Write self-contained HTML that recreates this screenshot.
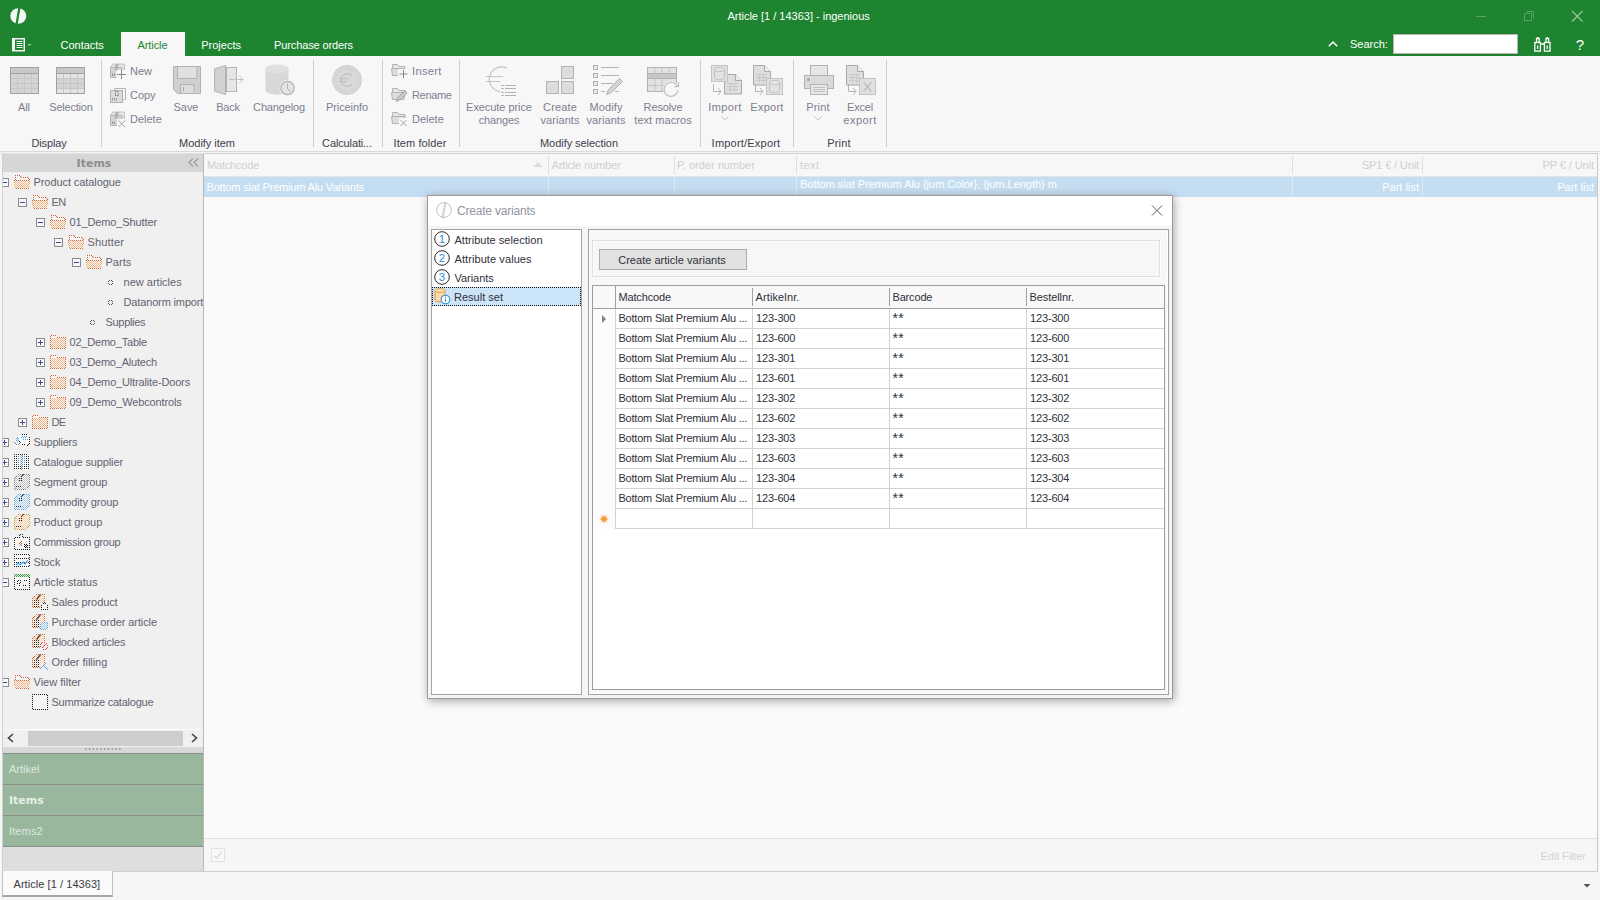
<!DOCTYPE html>
<html lang="en"><head><meta charset="utf-8"><title>Article [1 / 14363] - ingenious</title>
<style>
html,body{margin:0;padding:0}
body{width:1600px;height:900px;position:relative;overflow:hidden;background:#f7f7f7;font-family:"Liberation Sans",sans-serif;font-size:11px;color:#6c6c80;}
.a{position:absolute;white-space:nowrap}
.t{position:absolute;white-space:nowrap;line-height:14px;height:14px}
.c{transform:translateX(-50%);text-align:center}
.r{transform:translateX(-100%);text-align:right}
svg{position:absolute;overflow:visible}
</style></head>
<body>
<div class="a" style="left:0px;top:0px;width:1600px;height:56px;background:#1e8430"></div>
<svg style="left:10px;top:8px" width="17" height="17" viewBox="0 0 17 17"><ellipse cx="8.3" cy="8" rx="8" ry="7.8" fill="#f4f8f4"/><path d="M8.3 -0.5 L10.6 -0.5 L7.6 16.5 L5.4 16.5 Z" fill="#1e8430"/></svg>
<div class="t c" style="left:798.6px;top:9px;letter-spacing:-0.006px;color:#fff;font-size:11px">Article [1 / 14363] - ingenious</div>
<svg style="left:1470px;top:6px" width="120" height="20" viewBox="0 0 120 20"><path d="M6 10.5h10" stroke="#58a566" stroke-width="1" fill="none"/><path d="M56.5 5.5h7v7M54.5 7.5h7v7h-7z" stroke="#58a566" stroke-width="1" fill="none"/><path d="M102 5l10.5 10.5M112.5 5L102 15.5" stroke="#9ccaa4" stroke-width="1.1" fill="none"/></svg>
<svg style="left:12px;top:38px" width="22" height="14" viewBox="0 0 22 14"><rect x="0.75" y="0.75" width="11.5" height="12" fill="#1e8430" stroke="#f2f2f2" stroke-width="1.5"/><rect x="0.5" y="0.5" width="2.5" height="12.5" fill="#f2f2f2"/><path d="M4.5 3.5h6M4.5 5.5h6M4.5 7.5h6M4.5 9.5h6" stroke="#f2f2f2" stroke-width="1"/><path d="M15.5 6h4l-2 2z" fill="#9fcda8"/></svg>
<div class="t c" style="left:82.2px;top:38px;letter-spacing:-0.005px;color:#fff">Contacts</div>
<div class="a" style="left:121px;top:32px;width:64px;height:24px;background:#f7f7f7"></div>
<div class="t c" style="left:152.5px;top:38px;letter-spacing:-0.080px;color:#1e8430">Article</div>
<div class="t c" style="left:221.1px;top:38px;letter-spacing:0.006px;color:#fff">Projects</div>
<div class="t c" style="left:313.5px;top:38px;letter-spacing:-0.123px;color:#fff">Purchase orders</div>
<svg style="left:1328px;top:40px" width="10" height="8" viewBox="0 0 10 8"><path d="M0.8 6.2L5 2l4.2 4.2" stroke="#fff" stroke-width="1.5" fill="none"/></svg>
<div class="t " style="left:1350px;top:37px;letter-spacing:-0.020px;color:#fff">Search:</div>
<div class="a" style="left:1393px;top:34px;width:123px;height:18px;background:#fff;border:1px solid #b4b4b4"></div>
<svg style="left:1534px;top:36px" width="17" height="16" viewBox="0 0 17 16"><g fill="none" stroke="#fff" stroke-width="1.3"><rect x="0.8" y="6.5" width="5.6" height="8.6"/><rect x="10.4" y="6.5" width="5.6" height="8.6"/><path d="M2.5 6.5v-4h2.6v4M12 6.5v-4h2.6v4M6.4 8h4M3.6 9.5v3.5M13.2 9.5v3.5M3.8 1v1.5M13.3 1v1.5"/></g></svg>
<div class="t c" style="left:1580px;top:38px;color:#fff;font-size:15px;line-height:14px">?</div>
<div class="a" style="left:0px;top:56px;width:1600px;height:95px;background:#f7f7f7"></div>
<div class="a" style="left:0px;top:151px;width:1600px;height:1px;background:#dadada"></div>
<div class="a" style="left:0px;top:152px;width:1600px;height:2px;background:#f4f4f4"></div>
<div class="a" style="left:101px;top:60px;width:1px;height:87px;background:#cfcfcf"></div>
<div class="a" style="left:313px;top:60px;width:1px;height:87px;background:#cfcfcf"></div>
<div class="a" style="left:382px;top:60px;width:1px;height:87px;background:#cfcfcf"></div>
<div class="a" style="left:459px;top:60px;width:1px;height:87px;background:#cfcfcf"></div>
<div class="a" style="left:700px;top:60px;width:1px;height:87px;background:#cfcfcf"></div>
<div class="a" style="left:793px;top:60px;width:1px;height:87px;background:#cfcfcf"></div>
<div class="a" style="left:886px;top:60px;width:1px;height:87px;background:#cfcfcf"></div>
<svg style="left:10px;top:67px" width="29" height="27" viewBox="0 0 29 27"><rect x="0.500" y="0.500" width="28" height="26" fill="#d4d4d4" stroke="#a2a2a2"/><rect x="0.500" y="0.500" width="28" height="6" fill="#c8c8c8" stroke="#a2a2a2"/><path d="M7.500 7v19M14.500 7v19M21.500 7v19M1 11.500h27M1 16.500h27M1 21.500h27" stroke="#c6c6c6" fill="none"/></svg>
<svg style="left:56px;top:67px" width="29" height="27" viewBox="0 0 29 27"><rect x="0.500" y="0.500" width="28" height="26" fill="#d4d4d4" stroke="#a2a2a2"/><rect x="1" y="6" width="27" height="5" fill="#e2e2e2"/><rect x="1" y="22" width="27" height="4" fill="#e2e2e2"/><rect x="0.500" y="0.500" width="28" height="6" fill="#c8c8c8" stroke="#a2a2a2"/><path d="M7.500 7v19M14.500 7v19M21.500 7v19M1 11.500h27M1 16.500h27M1 21.500h27" stroke="#c6c6c6" fill="none"/></svg>
<div class="t c" style="left:24px;top:100px;letter-spacing:-0.140px;color:#7e7e90">All</div>
<div class="t c" style="left:71px;top:100px;letter-spacing:-0.220px;color:#7e7e90">Selection</div>
<div class="t c" style="left:49px;top:136px;letter-spacing:-0.123px;color:#40404c">Display</div>
<svg style="left:110px;top:63px" width="17" height="17" viewBox="0 0 17 17"><path d="M0.500 4.500l2.500-3.500h11.500v7l-2.500 3.500" fill="#e6e6e6" stroke="#c2c2c2"/><path d="M0.500 4.500h11.500v10h-11.500z" fill="#d6d6d6" stroke="#b2b2b2"/><path d="M5.500 1h3.500l-1 3.500v3h-3.500v-3z" fill="#b4b4b4"/><path d="M2.500 10.500v2.500M4.500 10.500v2.500" stroke="#8e8e8e"/><rect x="6.500" y="7" width="10" height="9.500" fill="#f7f7f7"/><path d="M11.500 7v9M7 11.500h9" stroke="#8a8a8a" fill="none"/></svg>
<svg style="left:110px;top:87px" width="17" height="17" viewBox="0 0 17 17"><path d="M4.5 3.5v-2h11v11h-2" fill="none" stroke="#b2b2b2"/><rect x="0.5" y="3.5" width="12" height="12" fill="#dcdcdc" stroke="#b2b2b2"/><rect x="5.5" y="4.5" width="2.5" height="4" fill="#eee" stroke="#9a9a9a"/><path d="M2.5 11v2.5M4.5 11v2.5M6.5 11v2.5" stroke="#9a9a9a"/></svg>
<svg style="left:110px;top:111px" width="17" height="17" viewBox="0 0 17 17"><path d="M0.500 4.500l2.500-3.500h11.500v7l-2.500 3.500" fill="#e6e6e6" stroke="#c2c2c2"/><path d="M0.500 4.500h11.500v10h-11.500z" fill="#d6d6d6" stroke="#b2b2b2"/><path d="M5.500 1h3.500l-1 3.500v3h-3.500v-3z" fill="#b4b4b4"/><path d="M2.500 10.500v2.500M4.500 10.500v2.500" stroke="#8e8e8e"/><rect x="7" y="8" width="9.500" height="8.500" fill="#f7f7f7"/><path d="M8.500 9.500l6.500 6.500M15 9.500l-6.500 6.500" stroke="#a6a6a6" fill="none"/></svg>
<div class="t " style="left:130px;top:64px;letter-spacing:-0.067px;color:#7e7e90">New</div>
<div class="t " style="left:130px;top:88px;letter-spacing:-0.047px;color:#7e7e90">Copy</div>
<div class="t " style="left:130px;top:112px;letter-spacing:-0.002px;color:#7e7e90">Delete</div>
<svg style="left:173px;top:66px" width="28" height="28" viewBox="0 0 28 28"><path d="M0.5 0.5h27v27h-23l-4-4z" fill="#d0d0d0" stroke="#b2b2b2"/><rect x="4.5" y="0.5" width="19.5" height="12" fill="#e0e0e0" stroke="#b2b2b2"/><rect x="7.5" y="18.5" width="13.5" height="9" fill="#dcdcdc" stroke="#b2b2b2"/><path d="M10.5 21v4" stroke="#a8a8a8"/></svg>
<div class="t c" style="left:186px;top:100px;letter-spacing:-0.073px;color:#7e7e90">Save</div>
<svg style="left:214px;top:64px" width="32" height="32" viewBox="0 0 32 32"><rect x="12.5" y="3.5" width="10" height="24" fill="#e6e6e6" stroke="#b2b2b2"/><path d="M0.5 5l11-3.5v29l-11-3.5z" fill="#d2d2d2" stroke="#b2b2b2"/><path d="M15 15.500h14M25 11.500l4 4l-4 4" stroke="#c0c0c0" fill="none"/></svg>
<div class="t c" style="left:228px;top:100px;letter-spacing:-0.217px;color:#7e7e90">Back</div>
<svg style="left:265px;top:64px" width="32" height="33" viewBox="0 0 32 33"><path d="M0.500 5v21c0 6 23 6 23 0v-21z" fill="#d8d8d8"/><ellipse cx="12" cy="5" rx="11.500" ry="4.500" fill="#e0e0e0"/><circle cx="22.500" cy="24" r="8" fill="#f7f7f7"/><circle cx="22.500" cy="24" r="6.700" fill="#e4e4e4" stroke="#b2b2b2" stroke-width="1.2"/><path d="M22.500 19.500v5l3 3" stroke="#b2b2b2" fill="none"/></svg>
<div class="t c" style="left:279px;top:100px;letter-spacing:-0.161px;color:#7e7e90">Changelog</div>
<div class="t c" style="left:207px;top:136px;letter-spacing:-0.041px;color:#40404c">Modify item</div>
<svg style="left:332px;top:65px" width="30" height="30" viewBox="0 0 30 30"><circle cx="15" cy="15" r="14.500" fill="#d9d9d9" stroke="#cccccc"/><circle cx="15" cy="15" r="11.500" fill="none" stroke="#cfcfcf" stroke-dasharray="14 3"/><path d="M20 10.500a6.500 6.500 0 1 0 0 9M7 13.500h9M7 16.500h8" stroke="#c2c2c2" stroke-width="1.300" fill="none"/></svg>
<div class="t c" style="left:347px;top:100px;letter-spacing:-0.079px;color:#7e7e90">Priceinfo</div>
<div class="t c" style="left:347px;top:136px;letter-spacing:-0.131px;color:#40404c">Calculati...</div>
<svg style="left:391px;top:62px" width="17" height="17" viewBox="0 0 17 17"><path d="M1.500 2.500h5l1.500 2h6v3h-12.500z" fill="#e6e6e6" stroke="#b2b2b2"/><path d="M0.500 6.500h13.500l-1 7h-11.500z" fill="#dcdcdc" stroke="#b2b2b2"/><rect x="7" y="7" width="10" height="10" fill="#f7f7f7"/><path d="M12.500 8v8M8.500 12h8" stroke="#8a8a8a" fill="none"/></svg>
<svg style="left:391px;top:86px" width="17" height="17" viewBox="0 0 17 17"><path d="M1.500 2.500h5l1.500 2h6v3h-12.500z" fill="#e6e6e6" stroke="#b2b2b2"/><path d="M0.500 6.500h13.500l-1 7h-11.500z" fill="#dcdcdc" stroke="#b2b2b2"/><path d="M5.500 15.500l1.500-4 7-6.500 2 2-7 6.500z" fill="#cfcfcf" stroke="#a0a0a0"/></svg>
<svg style="left:391px;top:110px" width="17" height="17" viewBox="0 0 17 17"><path d="M1.500 2.500h5l1.500 2h6v3h-12.500z" fill="#e6e6e6" stroke="#b2b2b2"/><path d="M0.500 6.500h13.500l-1 7h-11.500z" fill="#dcdcdc" stroke="#b2b2b2"/><rect x="8" y="8" width="9" height="9" fill="#f7f7f7"/><path d="M9.500 10l6 6M15.500 10l-6 6" stroke="#a0a0a0" fill="none"/></svg>
<div class="t " style="left:412px;top:64px;letter-spacing:0.378px;color:#7e7e90">Insert</div>
<div class="t " style="left:412px;top:88px;letter-spacing:-0.332px;color:#7e7e90">Rename</div>
<div class="t " style="left:412px;top:112px;letter-spacing:-0.002px;color:#7e7e90">Delete</div>
<div class="t c" style="left:420px;top:136px;letter-spacing:0.091px;color:#40404c">Item folder</div>
<svg style="left:486px;top:66px" width="32" height="32" viewBox="0 0 32 32"><path d="M21 2.2a12.3 12.3 0 1 0 -6.500 23.300M0 10.500h17M0 15.500h14" stroke="#c4c4c4" stroke-width="1.200" fill="none"/><path d="M19 19.500h11M19 22.500h11M19 26.500h11M19 29.500h11" stroke="#b2b2b2" fill="none"/><path d="M15.500 19.500h2M15.500 22.500h2M15.500 26.500h2M15.500 29.500h2" stroke="#9a9a9a"/></svg>
<div class="t c" style="left:499px;top:100px;letter-spacing:-0.068px;color:#7e7e90">Execute price</div>
<div class="t c" style="left:499px;top:113px;letter-spacing:-0.161px;color:#7e7e90">changes</div>
<svg style="left:546px;top:66px" width="29" height="29" viewBox="0 0 29 29"><rect x="15.500" y="0.500" width="12" height="12" fill="#dcdcdc" stroke="#b2b2b2"/><rect x="0.500" y="15.500" width="12" height="12" fill="#dcdcdc" stroke="#b2b2b2"/><rect x="15.500" y="15.500" width="12" height="12" fill="#dcdcdc" stroke="#b2b2b2"/></svg>
<div class="t c" style="left:560px;top:100px;letter-spacing:0.128px;color:#7e7e90">Create</div>
<div class="t c" style="left:560px;top:113px;letter-spacing:0.084px;color:#7e7e90">variants</div>
<svg style="left:593px;top:65px" width="32" height="32" viewBox="0 0 32 32"><g fill="#eee" stroke="#b2b2b2"><rect x="0.500" y="0.500" width="4" height="4"/><rect x="0.500" y="8.500" width="4" height="4"/><rect x="0.500" y="16.500" width="4" height="4"/><rect x="0.500" y="24.500" width="4" height="4"/></g><path d="M8 2.500h18M8 10.500h18M8 18.500h12M8 26.500h4M22 26.500h4" stroke="#b2b2b2" fill="none"/><path d="M13.500 29.500l2-5 11-11 3 3-11 11z" fill="#d4d4d4" stroke="#b2b2b2"/></svg>
<div class="t c" style="left:606px;top:100px;letter-spacing:0.099px;color:#7e7e90">Modify</div>
<div class="t c" style="left:606px;top:113px;letter-spacing:0.084px;color:#7e7e90">variants</div>
<svg style="left:647px;top:67px" width="33" height="30" viewBox="0 0 33 30"><rect x="0.500" y="0.500" width="29" height="24" fill="#e2e2e2" stroke="#b2b2b2"/><rect x="0.500" y="6.500" width="29" height="5" fill="#c8c8c8" stroke="#b2b2b2"/><path d="M8 0.500v6M15 0.500v6M22 0.500v6M8 11.500v13M15 11.500v13M0.500 18.500h17" stroke="#c4c4c4" fill="none"/><circle cx="24" cy="22" r="8" fill="#f7f7f7"/><path d="M30.500 19.500a7 7 0 1 0 0.500 4M27 19.500h4.500v-4.500" stroke="#c0c0c0" stroke-width="1.200" fill="none"/></svg>
<div class="t c" style="left:663px;top:100px;letter-spacing:-0.136px;color:#7e7e90">Resolve</div>
<div class="t c" style="left:663px;top:113px;letter-spacing:0.048px;color:#7e7e90">text macros</div>
<div class="t c" style="left:579px;top:136px;letter-spacing:-0.057px;color:#40404c">Modify selection</div>
<svg style="left:711px;top:65px" width="31" height="31" viewBox="0 0 31 31"><path d="M13.500 9.500h11l6 6v13.500h-17z" fill="#dedede" stroke="#a8a8a8"/><path d="M24.500 9.500v6h6" fill="#f0f0f0" stroke="#a8a8a8"/><path d="M16 18.500h11M16 21.500h11M16 24.500h11M19.500 18v9M23.500 18v9" stroke="#c8c8c8" fill="none"/><rect x="0.500" y="0.500" width="16" height="16" fill="#e0e0e0" stroke="#c4c4c4"/><path d="M3.5 4.5v8c0 3 10 3 10 0v-8" fill="#e2e2e2" stroke="#c0c0c0"/><ellipse cx="8.5" cy="4.5" rx="5" ry="2" fill="#e8e8e8" stroke="#c0c0c0"/><path d="M2.500 19v7.500h7M7 23l3 3.500l-3 3.500" stroke="#b4b4b4" fill="none"/></svg>
<div class="t c" style="left:725px;top:100px;letter-spacing:0.352px;color:#7e7e90">Import</div>
<svg style="left:721px;top:116px" width="8" height="5" viewBox="0 0 8 5"><path d="M0.500 0.500l3.500 3.500l3.500-3.500" stroke="#c4c4c4" fill="none"/></svg>
<svg style="left:753px;top:65px" width="31" height="31" viewBox="0 0 31 31"><path d="M0.500 0.500h11l6 6v13.500h-17z" fill="#dedede" stroke="#a8a8a8"/><path d="M11.500 0.500v6h6" fill="#f0f0f0" stroke="#a8a8a8"/><path d="M3 9.500h11M3 12.500h11M3 15.500h11M6.500 9v9M10.500 9v9" stroke="#c8c8c8" fill="none"/><path d="M2.500 19v7.500h7M7 23l3 3.500l-3 3.500" stroke="#b4b4b4" fill="none"/><rect x="13.500" y="13.500" width="16" height="16" fill="#e0e0e0" stroke="#c4c4c4"/><path d="M16.5 17.5v8c0 3 10 3 10 0v-8" fill="#e2e2e2" stroke="#c0c0c0"/><ellipse cx="21.5" cy="17.5" rx="5" ry="2" fill="#e8e8e8" stroke="#c0c0c0"/></svg>
<div class="t c" style="left:767px;top:100px;letter-spacing:0.248px;color:#7e7e90">Export</div>
<div class="t c" style="left:746px;top:136px;letter-spacing:0.211px;color:#40404c">Import/Export</div>
<svg style="left:804px;top:65px" width="31" height="31" viewBox="0 0 31 31"><rect x="6.500" y="0.500" width="17" height="11" fill="#e6e6e6" stroke="#b2b2b2"/><rect x="0.500" y="10.500" width="29" height="13" fill="#dadada" stroke="#b2b2b2"/><rect x="3" y="13" width="3" height="3" fill="#b0b0b0"/><rect x="6.500" y="19.500" width="17" height="10" fill="#e8e8e8" stroke="#b2b2b2"/><path d="M9 22.500h12M9 24.500h12M9 26.500h12" stroke="#c0c0c0"/></svg>
<div class="t c" style="left:818px;top:100px;letter-spacing:0.155px;color:#7e7e90">Print</div>
<svg style="left:814px;top:116px" width="8" height="5" viewBox="0 0 8 5"><path d="M0.500 0.500l3.500 3.500l3.500-3.500" stroke="#c4c4c4" fill="none"/></svg>
<svg style="left:846px;top:65px" width="31" height="31" viewBox="0 0 31 31"><path d="M0.500 0.500h11l6 6v13.500h-17z" fill="#dedede" stroke="#a8a8a8"/><path d="M11.500 0.500v6h6" fill="#f0f0f0" stroke="#a8a8a8"/><path d="M3 9.500h11M3 12.500h11M3 15.500h11M6.500 9v9M10.500 9v9" stroke="#c8c8c8" fill="none"/><path d="M2.500 19v7.500h7M7 23l3 3.500l-3 3.500" stroke="#b4b4b4" fill="none"/><rect x="13.500" y="13.500" width="16" height="16" fill="#e0e0e0" stroke="#c4c4c4"/><path d="M17.500 17l8 9.500M25.500 17l-8 9.500" stroke="#bdbdbd" stroke-width="1.300" fill="none"/></svg>
<div class="t c" style="left:860px;top:100px;letter-spacing:-0.161px;color:#7e7e90">Excel</div>
<div class="t c" style="left:860px;top:113px;letter-spacing:0.451px;color:#7e7e90">export</div>
<div class="t c" style="left:839px;top:136px;letter-spacing:0.155px;color:#40404c">Print</div>
<svg width="0" height="0" style="left:0;top:0"><defs>
<pattern id="pO" width="2" height="2" patternUnits="userSpaceOnUse"><rect width="1" height="1" fill="#f9b88a"/><rect x="1" y="1" width="1" height="1" fill="#f9b88a"/></pattern>
<pattern id="pOd" width="2" height="2" patternUnits="userSpaceOnUse"><rect width="1" height="1" fill="#cf6330"/><rect x="1" y="1" width="1" height="1" fill="#cf6330"/></pattern>
<pattern id="pOs" width="2" height="2" patternUnits="userSpaceOnUse"><rect width="1" height="1" fill="#f0a24a"/><rect x="1" y="1" width="1" height="1" fill="#f0a24a"/></pattern>
<pattern id="pK" width="2" height="2" patternUnits="userSpaceOnUse"><rect width="1" height="1" fill="#1a1a1a"/><rect x="1" y="1" width="1" height="1" fill="#1a1a1a"/></pattern>
<pattern id="pB" width="2" height="2" patternUnits="userSpaceOnUse"><rect width="1" height="1" fill="#5aa5e0"/><rect x="1" y="1" width="1" height="1" fill="#5aa5e0"/></pattern>
<pattern id="pBl" width="2" height="2" patternUnits="userSpaceOnUse"><rect width="1" height="1" fill="#a8cdf0"/><rect x="1" y="1" width="1" height="1" fill="#a8cdf0"/></pattern>
<pattern id="pGy" width="2" height="2" patternUnits="userSpaceOnUse"><rect width="1" height="1" fill="#9a9a9a"/><rect x="1" y="1" width="1" height="1" fill="#9a9a9a"/></pattern>
<pattern id="pGr" width="2" height="2" patternUnits="userSpaceOnUse"><rect width="1" height="1" fill="#2a9a3a"/><rect x="1" y="1" width="1" height="1" fill="#2a9a3a"/></pattern>
<pattern id="pR" width="2" height="2" patternUnits="userSpaceOnUse"><rect width="1" height="1" fill="#e84040"/><rect x="1" y="1" width="1" height="1" fill="#e84040"/></pattern>
<pattern id="pW" width="2" height="2" patternUnits="userSpaceOnUse"><rect width="1" height="1" fill="#fafafa"/><rect x="1" y="1" width="1" height="1" fill="#fafafa"/></pattern>
<pattern id="pK4" width="2" height="2" patternUnits="userSpaceOnUse"><rect width="1" height="1" fill="#222"/></pattern>
<pattern id="pB4" width="2" height="2" patternUnits="userSpaceOnUse"><rect width="1" height="1" fill="#2f9ad8"/></pattern>
<pattern id="pGyl" width="2" height="2" patternUnits="userSpaceOnUse"><rect width="1" height="1" fill="#c2c2c2"/><rect x="1" y="1" width="1" height="1" fill="#c2c2c2"/></pattern>
<pattern id="pGyd" width="2" height="2" patternUnits="userSpaceOnUse"><rect width="1" height="1" fill="#7c7c7c"/><rect x="1" y="1" width="1" height="1" fill="#7c7c7c"/></pattern>
<pattern id="pAm" width="2" height="2" patternUnits="userSpaceOnUse"><rect width="1" height="1" fill="#c99232"/><rect x="1" y="1" width="1" height="1" fill="#c99232"/></pattern>
<pattern id="pOl" width="2" height="2" patternUnits="userSpaceOnUse"><rect width="1" height="1" fill="#fbc9a2"/><rect x="1" y="1" width="1" height="1" fill="#fbc9a2"/></pattern>
</defs></svg>
<div class="a" style="left:3px;top:154px;width:201px;height:717px;background:#f0f0f0"></div>
<div class="a" style="left:2px;top:154px;width:1px;height:717px;background:#d0d0d0"></div>
<div class="a" style="left:203px;top:154px;width:1px;height:717px;background:#b9b9b9"></div>
<div class="a" style="left:3px;top:154px;width:200px;height:18px;background:#d6d6d6"></div>
<div class="t c" style="left:94px;top:157px;color:#8e8e8e;font-weight:bold;font-family:'DejaVu Sans','Liberation Sans',sans-serif;font-size:11px">Items</div>
<svg style="left:188px;top:158px" width="11" height="9" viewBox="0 0 11 9"><path d="M5 0.500l-4 4l4 4M10 0.500l-4 4l4 4" stroke="#6a6a6a" fill="none"/></svg>
<div class="a" style="left:3px;top:172px;width:200px;height:557px;overflow:hidden">
<svg style="left:-3px;top:6px" width="9" height="9" viewBox="0 0 9 9" shape-rendering="crispEdges"><rect x="0.500" y="0.500" width="8" height="8" fill="#f8f8f8" stroke="#8c8c8c"/><path d="M2 4.500h5" stroke="#3a4a9a"/></svg>
<svg style="left:11px;top:2px" width="16" height="16" viewBox="0 0 16 16" shape-rendering="crispEdges"><path d="M1.5 6v-4.5h4l2.5 2h6l1.5 2.5" fill="#f8f8f8" stroke="url(#pOd)"/><path d="M0.5 6.5h15l-1 8h-13z" fill="#f8f8f8"/><path d="M0.5 6.5h15l-1 8h-13z" fill="url(#pO)" stroke="url(#pOs)"/><path d="M0 6.5h16M1 14.5h14" stroke="url(#pOd)"/></svg>
<div class="t " style="left:30.5px;top:3px;letter-spacing:-0.074px;color:#636370">Product catalogue</div>
<svg style="left:15px;top:26px" width="9" height="9" viewBox="0 0 9 9" shape-rendering="crispEdges"><rect x="0.500" y="0.500" width="8" height="8" fill="#f8f8f8" stroke="#8c8c8c"/><path d="M2 4.500h5" stroke="#3a4a9a"/></svg>
<svg style="left:29px;top:22px" width="16" height="16" viewBox="0 0 16 16" shape-rendering="crispEdges"><path d="M1.5 6v-4.5h4l2.5 2h6l1.5 2.5" fill="#f8f8f8" stroke="url(#pOd)"/><path d="M0.5 6.5h15l-1 8h-13z" fill="#f8f8f8"/><path d="M0.5 6.5h15l-1 8h-13z" fill="url(#pO)" stroke="url(#pOs)"/><path d="M0 6.5h16M1 14.5h14" stroke="url(#pOd)"/></svg>
<div class="t " style="left:48.5px;top:23px;letter-spacing:-0.541px;color:#636370">EN</div>
<svg style="left:33px;top:46px" width="9" height="9" viewBox="0 0 9 9" shape-rendering="crispEdges"><rect x="0.500" y="0.500" width="8" height="8" fill="#f8f8f8" stroke="#8c8c8c"/><path d="M2 4.500h5" stroke="#3a4a9a"/></svg>
<svg style="left:47px;top:42px" width="16" height="16" viewBox="0 0 16 16" shape-rendering="crispEdges"><path d="M1.5 6v-4.5h4l2.5 2h6l1.5 2.5" fill="#f8f8f8" stroke="url(#pOd)"/><path d="M0.5 6.5h15l-1 8h-13z" fill="#f8f8f8"/><path d="M0.5 6.5h15l-1 8h-13z" fill="url(#pO)" stroke="url(#pOs)"/><path d="M0 6.5h16M1 14.5h14" stroke="url(#pOd)"/></svg>
<div class="t " style="left:66.5px;top:43px;letter-spacing:-0.123px;color:#636370">01_Demo_Shutter</div>
<svg style="left:51px;top:66px" width="9" height="9" viewBox="0 0 9 9" shape-rendering="crispEdges"><rect x="0.500" y="0.500" width="8" height="8" fill="#f8f8f8" stroke="#8c8c8c"/><path d="M2 4.500h5" stroke="#3a4a9a"/></svg>
<svg style="left:65px;top:62px" width="16" height="16" viewBox="0 0 16 16" shape-rendering="crispEdges"><path d="M1.5 6v-4.5h4l2.5 2h6l1.5 2.5" fill="#f8f8f8" stroke="url(#pOd)"/><path d="M0.5 6.5h15l-1 8h-13z" fill="#f8f8f8"/><path d="M0.5 6.5h15l-1 8h-13z" fill="url(#pO)" stroke="url(#pOs)"/><path d="M0 6.5h16M1 14.5h14" stroke="url(#pOd)"/></svg>
<div class="t " style="left:84.5px;top:63px;letter-spacing:0.143px;color:#636370">Shutter</div>
<svg style="left:69px;top:86px" width="9" height="9" viewBox="0 0 9 9" shape-rendering="crispEdges"><rect x="0.500" y="0.500" width="8" height="8" fill="#f8f8f8" stroke="#8c8c8c"/><path d="M2 4.500h5" stroke="#3a4a9a"/></svg>
<svg style="left:83px;top:82px" width="16" height="16" viewBox="0 0 16 16" shape-rendering="crispEdges"><path d="M1.5 6v-4.5h4l2.5 2h6l1.5 2.5" fill="#f8f8f8" stroke="url(#pOd)"/><path d="M0.5 6.5h15l-1 8h-13z" fill="#f8f8f8"/><path d="M0.5 6.5h15l-1 8h-13z" fill="url(#pO)" stroke="url(#pOs)"/><path d="M0 6.5h16M1 14.5h14" stroke="url(#pOd)"/></svg>
<div class="t " style="left:102.5px;top:83px;letter-spacing:0.023px;color:#636370">Parts</div>
<svg style="left:101px;top:102px" width="16" height="16" viewBox="0 0 16 16" shape-rendering="crispEdges"><rect x="5" y="6" width="1" height="1" fill="#555"/><rect x="7" y="6" width="1" height="1" fill="#555"/><rect x="4" y="7" width="1" height="1" fill="#555"/><rect x="8" y="7" width="1" height="1" fill="#555"/><rect x="4" y="9" width="1" height="1" fill="#555"/><rect x="8" y="9" width="1" height="1" fill="#555"/><rect x="5" y="10" width="1" height="1" fill="#555"/><rect x="7" y="10" width="1" height="1" fill="#555"/></svg>
<div class="t " style="left:120.5px;top:103px;letter-spacing:0.009px;color:#636370">new articles</div>
<svg style="left:101px;top:122px" width="16" height="16" viewBox="0 0 16 16" shape-rendering="crispEdges"><rect x="5" y="6" width="1" height="1" fill="#555"/><rect x="7" y="6" width="1" height="1" fill="#555"/><rect x="4" y="7" width="1" height="1" fill="#555"/><rect x="8" y="7" width="1" height="1" fill="#555"/><rect x="4" y="9" width="1" height="1" fill="#555"/><rect x="8" y="9" width="1" height="1" fill="#555"/><rect x="5" y="10" width="1" height="1" fill="#555"/><rect x="7" y="10" width="1" height="1" fill="#555"/></svg>
<div class="t " style="left:120.5px;top:123px;letter-spacing:-0.143px;color:#636370">Datanorm import</div>
<svg style="left:83px;top:142px" width="16" height="16" viewBox="0 0 16 16" shape-rendering="crispEdges"><rect x="5" y="6" width="1" height="1" fill="#555"/><rect x="7" y="6" width="1" height="1" fill="#555"/><rect x="4" y="7" width="1" height="1" fill="#555"/><rect x="8" y="7" width="1" height="1" fill="#555"/><rect x="4" y="9" width="1" height="1" fill="#555"/><rect x="8" y="9" width="1" height="1" fill="#555"/><rect x="5" y="10" width="1" height="1" fill="#555"/><rect x="7" y="10" width="1" height="1" fill="#555"/></svg>
<div class="t " style="left:102.5px;top:143px;letter-spacing:-0.302px;color:#636370">Supplies</div>
<svg style="left:33px;top:166px" width="9" height="9" viewBox="0 0 9 9" shape-rendering="crispEdges"><rect x="0.500" y="0.500" width="8" height="8" fill="#f8f8f8" stroke="#8c8c8c"/><path d="M2 4.500h5" stroke="#3a4a9a"/><path d="M4.500 2v5" stroke="#3a4a9a"/></svg>
<svg style="left:47px;top:162px" width="16" height="16" viewBox="0 0 16 16" shape-rendering="crispEdges"><path d="M0.5 4v-1.500l1-1h4.500l2.500 2" fill="#f8f8f8" stroke="url(#pOd)"/><rect x="0.5" y="3.5" width="15" height="11" fill="#f8f8f8"/><rect x="0.5" y="3.5" width="15" height="11" fill="url(#pO)" stroke="url(#pOd)"/><rect x="1" y="2" width="6" height="2" fill="url(#pW)"/></svg>
<div class="t " style="left:66.5px;top:163px;letter-spacing:-0.204px;color:#636370">02_Demo_Table</div>
<svg style="left:33px;top:186px" width="9" height="9" viewBox="0 0 9 9" shape-rendering="crispEdges"><rect x="0.500" y="0.500" width="8" height="8" fill="#f8f8f8" stroke="#8c8c8c"/><path d="M2 4.500h5" stroke="#3a4a9a"/><path d="M4.500 2v5" stroke="#3a4a9a"/></svg>
<svg style="left:47px;top:182px" width="16" height="16" viewBox="0 0 16 16" shape-rendering="crispEdges"><path d="M0.5 4v-1.500l1-1h4.500l2.500 2" fill="#f8f8f8" stroke="url(#pOd)"/><rect x="0.5" y="3.5" width="15" height="11" fill="#f8f8f8"/><rect x="0.5" y="3.5" width="15" height="11" fill="url(#pO)" stroke="url(#pOd)"/><rect x="1" y="2" width="6" height="2" fill="url(#pW)"/></svg>
<div class="t " style="left:66.5px;top:183px;letter-spacing:-0.204px;color:#636370">03_Demo_Alutech</div>
<svg style="left:33px;top:206px" width="9" height="9" viewBox="0 0 9 9" shape-rendering="crispEdges"><rect x="0.500" y="0.500" width="8" height="8" fill="#f8f8f8" stroke="#8c8c8c"/><path d="M2 4.500h5" stroke="#3a4a9a"/><path d="M4.500 2v5" stroke="#3a4a9a"/></svg>
<svg style="left:47px;top:202px" width="16" height="16" viewBox="0 0 16 16" shape-rendering="crispEdges"><path d="M0.5 4v-1.500l1-1h4.500l2.500 2" fill="#f8f8f8" stroke="url(#pOd)"/><rect x="0.5" y="3.5" width="15" height="11" fill="#f8f8f8"/><rect x="0.5" y="3.5" width="15" height="11" fill="url(#pO)" stroke="url(#pOd)"/><rect x="1" y="2" width="6" height="2" fill="url(#pW)"/></svg>
<div class="t " style="left:66.5px;top:203px;letter-spacing:-0.158px;color:#636370">04_Demo_Ultralite-Doors</div>
<svg style="left:33px;top:226px" width="9" height="9" viewBox="0 0 9 9" shape-rendering="crispEdges"><rect x="0.500" y="0.500" width="8" height="8" fill="#f8f8f8" stroke="#8c8c8c"/><path d="M2 4.500h5" stroke="#3a4a9a"/><path d="M4.500 2v5" stroke="#3a4a9a"/></svg>
<svg style="left:47px;top:222px" width="16" height="16" viewBox="0 0 16 16" shape-rendering="crispEdges"><path d="M0.5 4v-1.500l1-1h4.500l2.500 2" fill="#f8f8f8" stroke="url(#pOd)"/><rect x="0.5" y="3.5" width="15" height="11" fill="#f8f8f8"/><rect x="0.5" y="3.5" width="15" height="11" fill="url(#pO)" stroke="url(#pOd)"/><rect x="1" y="2" width="6" height="2" fill="url(#pW)"/></svg>
<div class="t " style="left:66.5px;top:223px;letter-spacing:-0.142px;color:#636370">09_Demo_Webcontrols</div>
<svg style="left:15px;top:246px" width="9" height="9" viewBox="0 0 9 9" shape-rendering="crispEdges"><rect x="0.500" y="0.500" width="8" height="8" fill="#f8f8f8" stroke="#8c8c8c"/><path d="M2 4.500h5" stroke="#3a4a9a"/><path d="M4.500 2v5" stroke="#3a4a9a"/></svg>
<svg style="left:29px;top:242px" width="16" height="16" viewBox="0 0 16 16" shape-rendering="crispEdges"><path d="M0.5 4v-1.500l1-1h4.500l2.500 2" fill="#f8f8f8" stroke="url(#pOd)"/><rect x="0.5" y="3.5" width="15" height="11" fill="#f8f8f8"/><rect x="0.5" y="3.5" width="15" height="11" fill="url(#pO)" stroke="url(#pOd)"/><rect x="1" y="2" width="6" height="2" fill="url(#pW)"/></svg>
<div class="t " style="left:48.5px;top:243px;letter-spacing:-0.600px;color:#636370">DE</div>
<svg style="left:-3px;top:266px" width="9" height="9" viewBox="0 0 9 9" shape-rendering="crispEdges"><rect x="0.500" y="0.500" width="8" height="8" fill="#f8f8f8" stroke="#8c8c8c"/><path d="M2 4.500h5" stroke="#3a4a9a"/><path d="M4.500 2v5" stroke="#3a4a9a"/></svg>
<svg style="left:11px;top:262px" width="16" height="16" viewBox="0 0 16 16" shape-rendering="crispEdges"><path d="M6 0h8l2 2v8l-3 4-3-3h-5l-2 3-3-3 2-7 2-1z" fill="#f9f9f9"/><path d="M6.5 0.5h7l2 2v7l-3 4-3-3.500h-3" fill="none" stroke="url(#pK)"/><path d="M6.500 1l-2 3 1.500 6" fill="none" stroke="url(#pK)"/><path d="M7 2h6v2h-6zM8 5h6v1h-6z" fill="url(#pB)"/><path d="M2 3h3v5h-3z" fill="url(#pB)"/><path d="M0.500 8.500l3 4 3-4" fill="none" stroke="url(#pGyd)"/></svg>
<div class="t " style="left:30.5px;top:263px;letter-spacing:-0.231px;color:#636370">Suppliers</div>
<svg style="left:-3px;top:286px" width="9" height="9" viewBox="0 0 9 9" shape-rendering="crispEdges"><rect x="0.500" y="0.500" width="8" height="8" fill="#f8f8f8" stroke="#8c8c8c"/><path d="M2 4.500h5" stroke="#3a4a9a"/><path d="M4.500 2v5" stroke="#3a4a9a"/></svg>
<svg style="left:11px;top:282px" width="16" height="16" viewBox="0 0 16 16" shape-rendering="crispEdges"><path d="M0 0h12l4 4v12h-16z" fill="#f9f9f9"/><path d="M0 0h12l4 4v12h-16z" fill="url(#pK4)"/><path d="M11.500 0.500l4 4" stroke="url(#pK)"/><rect x="4" y="2" width="7" height="10" fill="#f9f9f9"/><rect x="4" y="2" width="1" height="10" fill="url(#pB4)"/><rect x="10" y="2" width="1" height="10" fill="url(#pB4)"/><rect x="6" y="2" width="1" height="10" fill="url(#pBl)"/><path d="M7.500 0v16" stroke="url(#pGyd)"/><path d="M8.500 1v14" stroke="url(#pGyd)"/></svg>
<div class="t " style="left:30.5px;top:283px;letter-spacing:-0.127px;color:#636370">Catalogue supplier</div>
<svg style="left:-3px;top:306px" width="9" height="9" viewBox="0 0 9 9" shape-rendering="crispEdges"><rect x="0.500" y="0.500" width="8" height="8" fill="#f8f8f8" stroke="#8c8c8c"/><path d="M2 4.500h5" stroke="#3a4a9a"/><path d="M4.500 2v5" stroke="#3a4a9a"/></svg>
<svg style="left:11px;top:302px" width="16" height="16" viewBox="0 0 16 16" shape-rendering="crispEdges"><path d="M0.500 4.500l3-4h12v11l-3 4h-12z" fill="#f9f9f9"/><path d="M0.500 4.500l3-4h12v11l-3 4h-12z" fill="url(#pGyl)" stroke="url(#pGyd)"/><path d="M9.500 0.500l-3 3" stroke="#333" stroke-width="1.200"/><path d="M5 4h1v1h-1zM7 4h1v1h-1zM5 6h1v1h-1zM7 6h1v1h-1zM2 12h1v1h-1zM4 12h1v1h-1zM6 12h1v1h-1z" fill="#222"/></svg>
<div class="t " style="left:30.5px;top:303px;letter-spacing:-0.114px;color:#636370">Segment group</div>
<svg style="left:-3px;top:326px" width="9" height="9" viewBox="0 0 9 9" shape-rendering="crispEdges"><rect x="0.500" y="0.500" width="8" height="8" fill="#f8f8f8" stroke="#8c8c8c"/><path d="M2 4.500h5" stroke="#3a4a9a"/><path d="M4.500 2v5" stroke="#3a4a9a"/></svg>
<svg style="left:11px;top:322px" width="16" height="16" viewBox="0 0 16 16" shape-rendering="crispEdges"><path d="M0.500 4.500l3-4h12v11l-3 4h-12z" fill="#f9f9f9"/><path d="M0.500 4.500l3-4h12v11l-3 4h-12z" fill="url(#pBl)" stroke="url(#pB)"/><path d="M9.500 0.500l-3 3" stroke="#333" stroke-width="1.200"/><path d="M5 4h1v1h-1zM7 4h1v1h-1zM5 6h1v1h-1zM7 6h1v1h-1zM2 12h1v1h-1zM4 12h1v1h-1zM6 12h1v1h-1z" fill="#222"/></svg>
<div class="t " style="left:30.5px;top:323px;letter-spacing:-0.136px;color:#636370">Commodity group</div>
<svg style="left:-3px;top:346px" width="9" height="9" viewBox="0 0 9 9" shape-rendering="crispEdges"><rect x="0.500" y="0.500" width="8" height="8" fill="#f8f8f8" stroke="#8c8c8c"/><path d="M2 4.500h5" stroke="#3a4a9a"/><path d="M4.500 2v5" stroke="#3a4a9a"/></svg>
<svg style="left:11px;top:342px" width="16" height="16" viewBox="0 0 16 16" shape-rendering="crispEdges"><path d="M0.500 4.500l3-4h12v11l-3 4h-12z" fill="#f9f9f9"/><path d="M0.500 4.500l3-4h12v11l-3 4h-12z" fill="url(#pOl)" stroke="url(#pAm)"/><path d="M9.500 0.500l-3 3" stroke="#333" stroke-width="1.200"/><path d="M5 4h1v1h-1zM7 4h1v1h-1zM5 6h1v1h-1zM7 6h1v1h-1zM2 12h1v1h-1zM4 12h1v1h-1zM6 12h1v1h-1z" fill="#222"/></svg>
<div class="t " style="left:30.5px;top:343px;letter-spacing:-0.027px;color:#636370">Product group</div>
<svg style="left:-3px;top:366px" width="9" height="9" viewBox="0 0 9 9" shape-rendering="crispEdges"><rect x="0.500" y="0.500" width="8" height="8" fill="#f8f8f8" stroke="#8c8c8c"/><path d="M2 4.500h5" stroke="#3a4a9a"/><path d="M4.500 2v5" stroke="#3a4a9a"/></svg>
<svg style="left:11px;top:362px" width="16" height="16" viewBox="0 0 16 16" shape-rendering="crispEdges"><path d="M0.500 3.500h5v-3h3v3h7v12h-15z" fill="url(#pW)" stroke="url(#pK)"/><path d="M4 9l4-3v6z" fill="url(#pOd)"/><rect x="10" y="10" width="4" height="4" fill="url(#pK)"/></svg>
<div class="t " style="left:30.5px;top:363px;letter-spacing:-0.307px;color:#636370">Commission group</div>
<svg style="left:-3px;top:386px" width="9" height="9" viewBox="0 0 9 9" shape-rendering="crispEdges"><rect x="0.500" y="0.500" width="8" height="8" fill="#f8f8f8" stroke="#8c8c8c"/><path d="M2 4.500h5" stroke="#3a4a9a"/><path d="M4.500 2v5" stroke="#3a4a9a"/></svg>
<svg style="left:11px;top:382px" width="16" height="16" viewBox="0 0 16 16" shape-rendering="crispEdges"><rect x="0" y="0" width="16" height="14" fill="#f9f9f9"/><path d="M0 0.500h16M0 4.500h16M0 8.500h16M0 12.500h16M0.500 0v13M15.500 0v13" stroke="url(#pK)" fill="none"/><path d="M2 11l2-2 2 2 3-3 2 2 3-4" fill="none" stroke="#3f9fe0" stroke-width="1.200" shape-rendering="auto"/></svg>
<div class="t " style="left:30.5px;top:383px;letter-spacing:-0.146px;color:#636370">Stock</div>
<svg style="left:-3px;top:406px" width="9" height="9" viewBox="0 0 9 9" shape-rendering="crispEdges"><rect x="0.500" y="0.500" width="8" height="8" fill="#f8f8f8" stroke="#8c8c8c"/><path d="M2 4.500h5" stroke="#3a4a9a"/></svg>
<svg style="left:11px;top:402px" width="16" height="16" viewBox="0 0 16 16" shape-rendering="crispEdges"><rect x="0.500" y="2.500" width="15" height="13" fill="url(#pW)" stroke="url(#pK)"/><rect x="0" y="0" width="16" height="3" fill="url(#pGr)"/><path d="M3 6h3v3h-3zM9 6h4M4 11h2M9 11h4" stroke="url(#pK)" fill="none"/></svg>
<div class="t " style="left:30.5px;top:403px;letter-spacing:0.079px;color:#636370">Article status</div>
<svg style="left:29px;top:422px" width="16" height="16" viewBox="0 0 16 16" shape-rendering="crispEdges"><path d="M0.500 4.500l3-4h9v8l-3 5h-9z" fill="#f9f9f9"/><path d="M0.500 4.500l3-4h9v8l-3 5h-9z" fill="url(#pOl)" stroke="url(#pOd)"/><rect x="2" y="6" width="6" height="7" fill="url(#pK4)"/><path d="M8.500 0.500l-4 5" stroke="#444" stroke-width="1.300" shape-rendering="auto"/><rect x="9" y="9" width="7" height="7" fill="#f0f0f0"/><path d="M9.500 15.500v-5l3-2 3 2v5z" fill="url(#pW)" stroke="url(#pK)"/></svg>
<div class="t " style="left:48.5px;top:423px;letter-spacing:-0.093px;color:#636370">Sales product</div>
<svg style="left:29px;top:442px" width="16" height="16" viewBox="0 0 16 16" shape-rendering="crispEdges"><path d="M0.500 4.500l3-4h9v8l-3 5h-9z" fill="#f9f9f9"/><path d="M0.500 4.500l3-4h9v8l-3 5h-9z" fill="url(#pOl)" stroke="url(#pOd)"/><rect x="2" y="6" width="6" height="7" fill="url(#pK4)"/><path d="M8.500 0.500l-4 5" stroke="#444" stroke-width="1.300" shape-rendering="auto"/><circle cx="12" cy="12" r="4.500" fill="#f0f0f0"/><circle cx="12" cy="12" r="4" fill="url(#pBl)" stroke="url(#pB)"/></svg>
<div class="t " style="left:48.5px;top:443px;letter-spacing:-0.098px;color:#636370">Purchase order article</div>
<svg style="left:29px;top:462px" width="16" height="16" viewBox="0 0 16 16" shape-rendering="crispEdges"><path d="M0.500 4.500l3-4h9v8l-3 5h-9z" fill="#f9f9f9"/><path d="M0.500 4.500l3-4h9v8l-3 5h-9z" fill="url(#pOl)" stroke="url(#pOd)"/><rect x="2" y="6" width="6" height="7" fill="url(#pK4)"/><path d="M8.500 0.500l-4 5" stroke="#444" stroke-width="1.300" shape-rendering="auto"/><circle cx="12" cy="12" r="4.500" fill="#f0f0f0"/><circle cx="12" cy="12" r="3.500" fill="none" stroke="url(#pR)"/><path d="M9.500 14.500l5-5" stroke="#e84040"/></svg>
<div class="t " style="left:48.5px;top:463px;letter-spacing:-0.204px;color:#636370">Blocked articles</div>
<svg style="left:29px;top:482px" width="16" height="16" viewBox="0 0 16 16" shape-rendering="crispEdges"><path d="M0.500 4.500l3-4h9v8l-3 5h-9z" fill="#f9f9f9"/><path d="M0.500 4.500l3-4h9v8l-3 5h-9z" fill="url(#pOl)" stroke="url(#pOd)"/><rect x="2" y="6" width="6" height="7" fill="url(#pK4)"/><path d="M8.500 0.500l-4 5" stroke="#444" stroke-width="1.300" shape-rendering="auto"/><rect x="9" y="9" width="7" height="7" fill="#f0f0f0"/><path d="M9 15l4-6M11 11l5 5" stroke="url(#pB)" stroke-width="1.500" fill="none"/></svg>
<div class="t " style="left:48.5px;top:483px;letter-spacing:-0.035px;color:#636370">Order filling</div>
<svg style="left:-3px;top:506px" width="9" height="9" viewBox="0 0 9 9" shape-rendering="crispEdges"><rect x="0.500" y="0.500" width="8" height="8" fill="#f8f8f8" stroke="#8c8c8c"/><path d="M2 4.500h5" stroke="#3a4a9a"/></svg>
<svg style="left:11px;top:502px" width="16" height="16" viewBox="0 0 16 16" shape-rendering="crispEdges"><path d="M1.5 6v-4.5h4l2.5 2h6l1.5 2.5" fill="#f8f8f8" stroke="url(#pOd)"/><path d="M0.5 6.5h15l-1 8h-13z" fill="#f8f8f8"/><path d="M0.5 6.5h15l-1 8h-13z" fill="url(#pO)" stroke="url(#pOs)"/><path d="M0 6.5h16M1 14.5h14" stroke="url(#pOd)"/></svg>
<div class="t " style="left:30.5px;top:503px;letter-spacing:0.001px;color:#636370">View filter</div>
<svg style="left:29px;top:522px" width="16" height="16" viewBox="0 0 16 16" shape-rendering="crispEdges"><rect x="0.500" y="0.500" width="15" height="15" fill="url(#pW)" stroke="url(#pK)"/></svg>
<div class="t " style="left:48.5px;top:523px;letter-spacing:-0.244px;color:#636370">Summarize catalogue</div>
</div>
<div class="a" style="left:3px;top:729px;width:200px;height:18px;background:#f0f0f0"></div>
<div class="a" style="left:28px;top:731px;width:155px;height:15px;background:#cdcdcd"></div>
<svg style="left:7px;top:733px" width="8" height="10" viewBox="0 0 8 10"><path d="M6 1l-4.500 4l4.500 4" stroke="#444" stroke-width="1.600" fill="none"/></svg>
<svg style="left:190px;top:733px" width="8" height="10" viewBox="0 0 8 10"><path d="M2 1l4.500 4l-4.500 4" stroke="#444" stroke-width="1.600" fill="none"/></svg>
<div class="a" style="left:3px;top:747px;width:200px;height:6px;background:#d8d8d8"></div>
<div class="a" style="left:3px;top:729px;width:200px;height:1px;background:#fafafa"></div>
<svg style="left:85px;top:748px" width="36" height="2" viewBox="0 0 36 2"><path d="M0 1h36" stroke="#8c8c9c" stroke-width="1.400" stroke-dasharray="1.500 2.300"/></svg>
<div class="a" style="left:3px;top:753px;width:200px;height:93px;background:#99b79d"></div>
<div class="a" style="left:3px;top:753px;width:200px;height:1px;background:#8a8f8a"></div>
<div class="a" style="left:3px;top:784px;width:200px;height:1px;background:#8a8f8a"></div>
<div class="a" style="left:3px;top:815px;width:200px;height:1px;background:#8a8f8a"></div>
<div class="a" style="left:3px;top:846px;width:200px;height:1px;background:#8a8f8a"></div>
<div class="t " style="left:9px;top:762px;letter-spacing:-0.002px;color:#dfe9e0">Artikel</div>
<div class="t " style="left:9px;top:794px;color:#e6eee6;font-weight:bold;font-family:'DejaVu Sans','Liberation Sans',sans-serif">Items</div>
<div class="t " style="left:9px;top:824px;letter-spacing:0.128px;color:#dfe9e0">Items2</div>
<div class="a" style="left:3px;top:847px;width:200px;height:24px;background:#dedede"></div>
<div class="a" style="left:204px;top:154px;width:1393px;height:684px;background:#fafafa"></div>
<div class="a" style="left:0px;top:153px;width:204px;height:1px;background:#e2e2e2"></div>
<div class="a" style="left:204px;top:153px;width:1394px;height:1px;background:#d0d0d0"></div>
<div class="a" style="left:1597px;top:153px;width:1px;height:718px;background:#c9c9c9"></div>
<div class="a" style="left:204px;top:154px;width:1393px;height:23px;background:#f7f7f7"></div>
<div class="a" style="left:204px;top:176px;width:1393px;height:1px;background:#e4e4e4"></div>
<div class="a" style="left:548px;top:156px;width:1px;height:18px;background:#e0e0e0"></div>
<div class="a" style="left:674px;top:156px;width:1px;height:18px;background:#e0e0e0"></div>
<div class="a" style="left:796px;top:156px;width:1px;height:18px;background:#e0e0e0"></div>
<div class="a" style="left:1292px;top:156px;width:1px;height:18px;background:#e0e0e0"></div>
<div class="a" style="left:1422px;top:156px;width:1px;height:18px;background:#e0e0e0"></div>
<div class="t " style="left:207px;top:158px;letter-spacing:-0.194px;color:#cfcfd3">Matchcode</div>
<svg style="left:533px;top:162px" width="10" height="5" viewBox="0 0 10 5"><path d="M0 5l5-5l5 5z" fill="#dddddd"/></svg>
<div class="t " style="left:551.5px;top:158px;letter-spacing:-0.138px;color:#cfcfd3">Article number</div>
<div class="t " style="left:677px;top:158px;letter-spacing:-0.014px;color:#cfcfd3">P. order number</div>
<div class="t " style="left:800px;top:158px;letter-spacing:0.438px;color:#cfcfd3">text</div>
<div class="t r" style="left:1418.8541666666667px;top:158px;letter-spacing:-0.146px;color:#cfcfd3">SP1 € / Unit</div>
<div class="t r" style="left:1593.9071022727273px;top:158px;letter-spacing:-0.093px;color:#cfcfd3">PP € / Unit</div>
<div class="a" style="left:204px;top:177px;width:1393px;height:20px;background:#c5ddf1"></div>
<div class="a" style="left:548px;top:177px;width:1px;height:20px;background:#dbe9f5"></div>
<div class="a" style="left:674px;top:177px;width:1px;height:20px;background:#dbe9f5"></div>
<div class="a" style="left:796px;top:177px;width:1px;height:20px;background:#dbe9f5"></div>
<div class="a" style="left:1292px;top:177px;width:1px;height:20px;background:#dbe9f5"></div>
<div class="a" style="left:1422px;top:177px;width:1px;height:20px;background:#dbe9f5"></div>
<div class="t " style="left:206.5px;top:180px;letter-spacing:-0.175px;color:#ffffff">Bottom slat Premium Alu Variants</div>
<div class="t " style="left:800px;top:177px;letter-spacing:-0.022px;color:#ffffff">Bottom slat Premium Alu {jum.Color}, {jum.Length} m</div>
<div class="t r" style="left:1419.0125px;top:180px;letter-spacing:0.012px;color:#ffffff">Part list</div>
<div class="t r" style="left:1594.0125px;top:180px;letter-spacing:0.012px;color:#ffffff">Part list</div>
<div class="a" style="left:204px;top:838px;width:1393px;height:1px;background:#e2e2e2"></div>
<div class="a" style="left:204px;top:839px;width:1393px;height:32px;background:#f6f6f6"></div>
<div class="a" style="left:211px;top:848px;width:12px;height:12px;background:#f9f9f9;border:1px solid #e2e2e2"></div>
<svg style="left:213px;top:851px" width="10" height="9" viewBox="0 0 10 9"><path d="M1 4.500l2.500 3l5-6.500" stroke="#dcdcdc" stroke-width="1.300" fill="none"/></svg>
<div class="t r" style="left:1585.89375px;top:849px;letter-spacing:-0.106px;color:#d4d4d8">Edit Filter</div>
<div class="a" style="left:113px;top:871px;width:1485px;height:1px;background:#cfcfcf"></div>
<div class="a" style="left:0px;top:872px;width:1600px;height:28px;background:#f6f6f6"></div>
<div class="a" style="left:2px;top:871px;width:111px;height:26px;background:#fafafa;border-left:1px solid #c0c0c0;border-right:1px solid #c0c0c0;border-bottom:2px solid #a6a6a6;box-sizing:border-box"></div>
<div class="t " style="left:13.5px;top:877px;letter-spacing:0.059px;color:#3a3a44">Article [1 / 14363]</div>
<svg style="left:1583px;top:884px" width="8" height="4" viewBox="0 0 8 4"><path d="M0.500 0h7l-3.500 3.500z" fill="#555"/></svg>
<div class="a" style="left:427px;top:195px;width:746px;height:504px;background:#f5f5f5;box-sizing:border-box;border:1px solid #9a9a9c;box-shadow:1px 2px 9px 0px rgba(0,0,0,0.34)"></div>
<div class="a" style="left:428px;top:196px;width:744px;height:30px;background:#fff"></div>
<svg style="left:436px;top:202px" width="17" height="17" viewBox="0 0 17 17"><ellipse cx="8" cy="8" rx="7.300" ry="7.500" fill="#fff" stroke="#b9b9b9" stroke-width="0.900"/><path d="M8.800 0.800L6 15.300M10 1L7.300 15.500" stroke="#c0c0c0" stroke-width="0.800" fill="none"/></svg>
<div class="t " style="left:457px;top:204px;letter-spacing:-0.197px;color:#9494a4;font-size:12px">Create variants</div>
<svg style="left:1151px;top:205px" width="12" height="11" viewBox="0 0 12 11"><path d="M1 0.500l10 10M11 0.500l-10 10" stroke="#5a5a5a" stroke-width="1" fill="none"/></svg>
<div class="a" style="left:431px;top:229px;width:151px;height:466px;background:#fff;border:1px solid #a3a3a3;box-sizing:border-box"></div>
<svg style="left:434px;top:231px" width="17" height="17" viewBox="0 0 17 17"><circle cx="8" cy="8" r="7.300" fill="#fff" stroke="#2b2b2b" stroke-width="1"/><text x="8" y="12" text-anchor="middle" font-family="Liberation Sans, sans-serif" font-size="11.500" fill="#2e8fd6">1</text></svg>
<svg style="left:434px;top:250px" width="17" height="17" viewBox="0 0 17 17"><circle cx="8" cy="8" r="7.300" fill="#fff" stroke="#2b2b2b" stroke-width="1"/><text x="8" y="12" text-anchor="middle" font-family="Liberation Sans, sans-serif" font-size="11.500" fill="#2e8fd6">2</text></svg>
<svg style="left:434px;top:269px" width="17" height="17" viewBox="0 0 17 17"><circle cx="8" cy="8" r="7.300" fill="#fff" stroke="#2b2b2b" stroke-width="1"/><text x="8" y="12" text-anchor="middle" font-family="Liberation Sans, sans-serif" font-size="11.500" fill="#2e8fd6">3</text></svg>
<div class="t " style="left:454.5px;top:233px;letter-spacing:0.032px;color:#30303a">Attribute selection</div>
<div class="t " style="left:454.5px;top:252px;letter-spacing:0.083px;color:#30303a">Attribute values</div>
<div class="t " style="left:454.5px;top:271px;letter-spacing:-0.045px;color:#30303a">Variants</div>
<div class="a" style="left:432px;top:287px;width:149px;height:19px;background:#cce4f7;border:1px dotted #111;box-sizing:border-box"></div>
<svg style="left:434px;top:288px" width="17" height="17" viewBox="0 0 17 17"><path d="M1 2.500v9.500c0 2.500 10 2.500 10 0v-9.500" fill="#f9d9a8" stroke="#e8963a"/><ellipse cx="6" cy="2.500" rx="5" ry="1.800" fill="#fbe6c4" stroke="#e8963a"/><circle cx="11.500" cy="11.500" r="4.300" fill="#fff" stroke="#2e8fd6" stroke-width="1.100"/><path d="M11.500 10.500v3.200" stroke="#2e8fd6" stroke-width="1.200"/><rect x="11" y="8.600" width="1.100" height="1.100" fill="#2e8fd6"/></svg>
<div class="t " style="left:454px;top:290px;letter-spacing:0.016px;color:#30303a">Result set</div>
<div class="a" style="left:588px;top:229px;width:581px;height:466px;background:#f7f7f7;border:1px solid #a3a3a3;box-sizing:border-box;box-shadow:inset -1px -1px 0 #fff"></div>
<div class="a" style="left:592px;top:240px;width:568px;height:37px;border:1px solid #e0e0e0;box-sizing:border-box;box-shadow:inset 1px 1px 0 #fcfcfc,1px 1px 0 #fcfcfc"></div>
<div class="a" style="left:599px;top:249px;width:148px;height:21px;background:#e1e1e1;border:1px solid #adadad;box-sizing:border-box"></div>
<div class="t c" style="left:672px;top:253px;letter-spacing:0.029px;color:#30303a">Create article variants</div>
<div class="a" style="left:592px;top:285px;width:573px;height:405px;background:#fff;border:1px solid #9c9c9c;box-sizing:border-box"></div>
<div class="a" style="left:593px;top:286px;width:571px;height:22px;background:#f8f8f8"></div>
<div class="a" style="left:593px;top:308px;width:571px;height:1px;background:#a0a0a0"></div>
<div class="a" style="left:615px;top:286px;width:1px;height:22px;background:#a0a0a0"></div>
<div class="a" style="left:593px;top:309px;width:22px;height:220px;background:#fcfcfc"></div>
<div class="a" style="left:752px;top:288px;width:1px;height:18px;background:#a0a0a0"></div>
<div class="a" style="left:889px;top:288px;width:1px;height:18px;background:#a0a0a0"></div>
<div class="a" style="left:1026px;top:288px;width:1px;height:18px;background:#a0a0a0"></div>
<div class="t " style="left:618.5px;top:290px;letter-spacing:-0.160px;color:#30303a">Matchcode</div>
<div class="t " style="left:755.5px;top:290px;letter-spacing:0.120px;color:#30303a">Artikelnr.</div>
<div class="t " style="left:892.5px;top:290px;letter-spacing:-0.171px;color:#30303a">Barcode</div>
<div class="t " style="left:1029.5px;top:290px;letter-spacing:-0.087px;color:#30303a">Bestellnr.</div>
<div class="a" style="left:615px;top:328px;width:549px;height:1px;background:#d2d2d2"></div>
<div class="a" style="left:615px;top:348px;width:549px;height:1px;background:#d2d2d2"></div>
<div class="a" style="left:615px;top:368px;width:549px;height:1px;background:#d2d2d2"></div>
<div class="a" style="left:615px;top:388px;width:549px;height:1px;background:#d2d2d2"></div>
<div class="a" style="left:615px;top:408px;width:549px;height:1px;background:#d2d2d2"></div>
<div class="a" style="left:615px;top:428px;width:549px;height:1px;background:#d2d2d2"></div>
<div class="a" style="left:615px;top:448px;width:549px;height:1px;background:#d2d2d2"></div>
<div class="a" style="left:615px;top:468px;width:549px;height:1px;background:#d2d2d2"></div>
<div class="a" style="left:615px;top:488px;width:549px;height:1px;background:#d2d2d2"></div>
<div class="a" style="left:615px;top:508px;width:549px;height:1px;background:#d2d2d2"></div>
<div class="a" style="left:615px;top:528px;width:549px;height:1px;background:#d2d2d2"></div>
<div class="a" style="left:615px;top:309px;width:1px;height:220px;background:#d2d2d2"></div>
<div class="a" style="left:752px;top:309px;width:1px;height:220px;background:#d2d2d2"></div>
<div class="a" style="left:889px;top:309px;width:1px;height:220px;background:#d2d2d2"></div>
<div class="a" style="left:1026px;top:309px;width:1px;height:220px;background:#d2d2d2"></div>
<div class="t " style="left:618.5px;top:311px;letter-spacing:-0.214px;color:#30303a">Bottom Slat Premium Alu ...</div>
<div class="t " style="left:756px;top:311px;letter-spacing:-0.158px;color:#30303a">123-300</div>
<div class="t " style="left:892.5px;top:310.5px;color:#30303a;font-size:14px;letter-spacing:0.4px">**</div>
<div class="t " style="left:1030px;top:311px;letter-spacing:-0.158px;color:#30303a">123-300</div>
<div class="t " style="left:618.5px;top:331px;letter-spacing:-0.214px;color:#30303a">Bottom Slat Premium Alu ...</div>
<div class="t " style="left:756px;top:331px;letter-spacing:-0.158px;color:#30303a">123-600</div>
<div class="t " style="left:892.5px;top:330.5px;color:#30303a;font-size:14px;letter-spacing:0.4px">**</div>
<div class="t " style="left:1030px;top:331px;letter-spacing:-0.158px;color:#30303a">123-600</div>
<div class="t " style="left:618.5px;top:351px;letter-spacing:-0.214px;color:#30303a">Bottom Slat Premium Alu ...</div>
<div class="t " style="left:756px;top:351px;letter-spacing:-0.158px;color:#30303a">123-301</div>
<div class="t " style="left:892.5px;top:350.5px;color:#30303a;font-size:14px;letter-spacing:0.4px">**</div>
<div class="t " style="left:1030px;top:351px;letter-spacing:-0.158px;color:#30303a">123-301</div>
<div class="t " style="left:618.5px;top:371px;letter-spacing:-0.214px;color:#30303a">Bottom Slat Premium Alu ...</div>
<div class="t " style="left:756px;top:371px;letter-spacing:-0.158px;color:#30303a">123-601</div>
<div class="t " style="left:892.5px;top:370.5px;color:#30303a;font-size:14px;letter-spacing:0.4px">**</div>
<div class="t " style="left:1030px;top:371px;letter-spacing:-0.158px;color:#30303a">123-601</div>
<div class="t " style="left:618.5px;top:391px;letter-spacing:-0.214px;color:#30303a">Bottom Slat Premium Alu ...</div>
<div class="t " style="left:756px;top:391px;letter-spacing:-0.158px;color:#30303a">123-302</div>
<div class="t " style="left:892.5px;top:390.5px;color:#30303a;font-size:14px;letter-spacing:0.4px">**</div>
<div class="t " style="left:1030px;top:391px;letter-spacing:-0.158px;color:#30303a">123-302</div>
<div class="t " style="left:618.5px;top:411px;letter-spacing:-0.214px;color:#30303a">Bottom Slat Premium Alu ...</div>
<div class="t " style="left:756px;top:411px;letter-spacing:-0.158px;color:#30303a">123-602</div>
<div class="t " style="left:892.5px;top:410.5px;color:#30303a;font-size:14px;letter-spacing:0.4px">**</div>
<div class="t " style="left:1030px;top:411px;letter-spacing:-0.158px;color:#30303a">123-602</div>
<div class="t " style="left:618.5px;top:431px;letter-spacing:-0.214px;color:#30303a">Bottom Slat Premium Alu ...</div>
<div class="t " style="left:756px;top:431px;letter-spacing:-0.158px;color:#30303a">123-303</div>
<div class="t " style="left:892.5px;top:430.5px;color:#30303a;font-size:14px;letter-spacing:0.4px">**</div>
<div class="t " style="left:1030px;top:431px;letter-spacing:-0.158px;color:#30303a">123-303</div>
<div class="t " style="left:618.5px;top:451px;letter-spacing:-0.214px;color:#30303a">Bottom Slat Premium Alu ...</div>
<div class="t " style="left:756px;top:451px;letter-spacing:-0.158px;color:#30303a">123-603</div>
<div class="t " style="left:892.5px;top:450.5px;color:#30303a;font-size:14px;letter-spacing:0.4px">**</div>
<div class="t " style="left:1030px;top:451px;letter-spacing:-0.158px;color:#30303a">123-603</div>
<div class="t " style="left:618.5px;top:471px;letter-spacing:-0.214px;color:#30303a">Bottom Slat Premium Alu ...</div>
<div class="t " style="left:756px;top:471px;letter-spacing:-0.158px;color:#30303a">123-304</div>
<div class="t " style="left:892.5px;top:470.5px;color:#30303a;font-size:14px;letter-spacing:0.4px">**</div>
<div class="t " style="left:1030px;top:471px;letter-spacing:-0.158px;color:#30303a">123-304</div>
<div class="t " style="left:618.5px;top:491px;letter-spacing:-0.214px;color:#30303a">Bottom Slat Premium Alu ...</div>
<div class="t " style="left:756px;top:491px;letter-spacing:-0.158px;color:#30303a">123-604</div>
<div class="t " style="left:892.5px;top:490.5px;color:#30303a;font-size:14px;letter-spacing:0.4px">**</div>
<div class="t " style="left:1030px;top:491px;letter-spacing:-0.158px;color:#30303a">123-604</div>
<svg style="left:601px;top:314px" width="6" height="10" viewBox="0 0 6 10"><path d="M1 1v8l4-4z" fill="#808080"/></svg>
<svg style="left:599px;top:514px" width="10" height="10" viewBox="0 0 10 10"><path d="M5 0L5.900 3 8.500 1.500 7 4.100 10 5 7 5.900 8.500 8.500 5.900 7 5 10 4.100 7 1.500 8.500 3 5.900 0 5 3 4.100 1.500 1.500 4.100 3z" fill="#f39a3c"/></svg>
</body></html>
